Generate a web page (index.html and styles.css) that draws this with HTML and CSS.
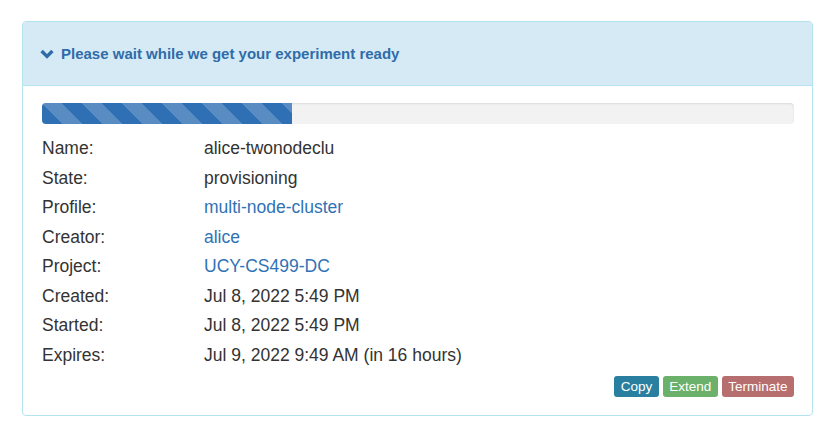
FILE: index.html
```html
<!DOCTYPE html>
<html>
<head>
<meta charset="utf-8">
<link rel="stylesheet" href="styles.css">
</head>
<body>
<div class="page">
  <div class="panel">
    <div class="panel-heading">
      <svg class="chevron" width="14" height="10" viewBox="0 0 14 10"><path d="M1.6 2 L7 7.4 L12.4 2" fill="none" stroke="#2f6ca8" stroke-width="3.4" stroke-linecap="butt" stroke-linejoin="miter"/></svg>
      <span class="title">Please wait while we get your experiment ready</span>
    </div>
    <div class="panel-body">
      <div class="progress"><div class="progress-bar" style="width:33.2%"></div></div>
      <div class="info">
        <div class="label">Name:</div><div class="value">alice-twonodeclu</div>
        <div class="label">State:</div><div class="value">provisioning</div>
        <div class="label">Profile:</div><div class="value"><a href="#">multi-node-cluster</a></div>
        <div class="label">Creator:</div><div class="value"><a href="#">alice</a></div>
        <div class="label">Project:</div><div class="value"><a href="#">UCY-CS499-DC</a></div>
        <div class="label">Created:</div><div class="value">Jul 8, 2022 5:49 PM</div>
        <div class="label">Started:</div><div class="value">Jul 8, 2022 5:49 PM</div>
        <div class="label">Expires:</div><div class="value">Jul 9, 2022 9:49 AM (in 16 hours)</div>
      </div>
      <div class="actions">
        <button class="btn btn-copy">Copy</button>
        <button class="btn btn-extend">Extend</button>
        <button class="btn btn-terminate">Terminate</button>
      </div>
    </div>
  </div>
</div>
</body>
</html>
```

FILE: styles.css
```css
* { box-sizing: border-box; }
html, body { margin: 0; padding: 0; background: #fff; }
body {
  font-family: "Liberation Sans", Arial, sans-serif;
  color: #333;
}
.page {
  padding: 21px 21px 0 22px;
}
.panel {
  border: 1px solid #b3e3ee;
  border-radius: 4px;
  background: #fff;
}
.panel-heading {
  height: 64px;
  background: #d6eaf6;
  border-bottom: 1px solid #b3e3ee;
  border-radius: 3px 3px 0 0;
  display: flex;
  align-items: center;
  padding: 0 0 0 17px;
  color: #2f6ca8;
  font-weight: bold;
  font-size: 15px;
}
.chevron { margin-right: 7px; margin-top: 0; }
.title { margin-top: -1px; }
.panel-body {
  padding: 17px 18px 18px 19px;
}
.progress {
  height: 21px;
  background: #f2f2f2;
  border-radius: 4px;
  box-shadow: inset 0 1px 2px rgba(0,0,0,.1);
  overflow: hidden;
}
.progress-bar {
  height: 100%;
  background-color: #2f6fb3;
  background-image: linear-gradient(45deg, rgba(255,255,255,.2) 25%, transparent 25%, transparent 50%, rgba(255,255,255,.2) 50%, rgba(255,255,255,.2) 75%, transparent 75%, transparent);
  background-size: 40px 40px;
}
.info {
  margin-top: 10px;
  display: grid;
  grid-template-columns: 162px 1fr;
  grid-auto-rows: 29.5px;
  align-items: center;
  font-size: 17.5px;
}
.value a { color: #2f72b5; text-decoration: none; }
.actions {
  display: flex;
  justify-content: flex-end;
  gap: 4px;
  margin-top: 6px;
}
.btn {
  font-family: "Liberation Sans", Arial, sans-serif;
  font-size: 13.5px;
  color: #fff;
  border: none;
  border-radius: 3px;
  height: 21px;
  padding: 0 6.5px;
  line-height: 21px;
}
.btn-copy { background: #297fa0; }
.btn-extend { background: #6bb06b; }
.btn-terminate { background: #b76e6e; }
```
